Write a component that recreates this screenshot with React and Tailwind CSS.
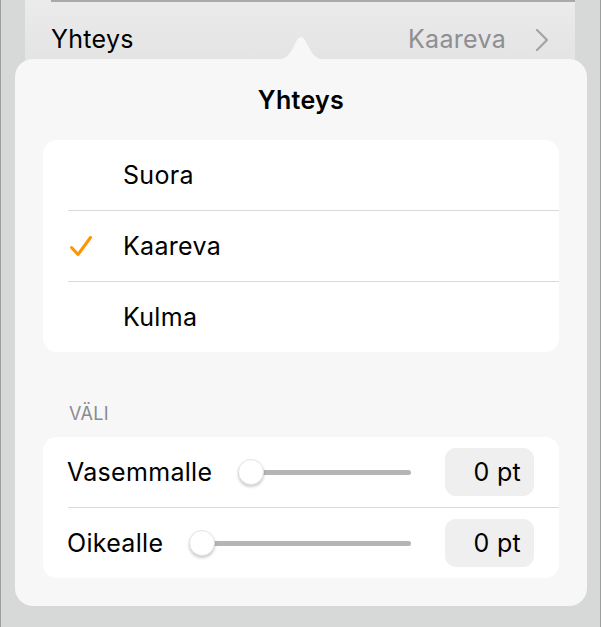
import React from "react";

const font = { fontFamily: "Inter, 'Noto Sans', sans-serif" };

function Check() {
  return (
    <svg width="24" height="22" viewBox="0 0 24 22" fill="none">
      <path d="M2.5 12.5 L9 19.5 L21.5 2.5" stroke="#ff9500" strokeWidth="3" strokeLinecap="round" strokeLinejoin="round" />
    </svg>
  );
}

function Chevron() {
  return (
    <svg width="16" height="24" viewBox="0 0 16 24" fill="none">
      <path d="M3 2 L13 12 L3 22" stroke="#a3a3a6" strokeWidth="2.2" strokeLinecap="round" strokeLinejoin="round" />
    </svg>
  );
}

function Option({ label, checked }) {
  return (
    <div className="flex h-[70px] items-center">
      <div className="flex w-[80px] pl-[26px]">{checked ? <Check /> : null}</div>
      <span className="text-[25px] leading-none tracking-[0.3px] text-black">{label}</span>
    </div>
  );
}

function SliderRow({ label }) {
  return (
    <div className="flex h-[70px] items-center pl-[24px] pr-[25px]">
      <span className="text-[25px] leading-none tracking-[0.3px] text-black">{label}</span>
      <div className="relative ml-[26px] mr-[34px] flex h-[28px] flex-1 items-center">
        <div className="h-[5px] w-full rounded-full bg-[#b5b5b5]" />
        <div className="absolute left-0 top-[1px] h-[26px] w-[26px] rounded-full border border-[#e4e4e4] bg-white shadow-[0_2px_3px_rgba(0,0,0,0.2)]" />
      </div>
      <div className="flex h-[48px] w-[89px] items-center justify-end rounded-[11px] bg-[#efeff0] pr-[13px] text-[25px] leading-none tracking-[0.3px] text-black">
        0 pt
      </div>
    </div>
  );
}

export default function App() {
  return (
    <div style={font} className="relative h-[627px] w-[601px] overflow-hidden border-x border-[#9d9d9d] bg-[#d7d9d8]">
      <div className="ml-[24px] h-[90px] w-[550px] bg-gradient-to-b from-[#ebebeb] to-[#e0e0e0]">
        <div className="ml-[26px] h-[2px] bg-[#a9a9a9]" />
        <div className="flex h-[74px] items-center pl-[26px] pr-[25px]">
          <span className="text-[25px] leading-none tracking-[0.3px] text-black">Yhteys</span>
          <span className="ml-auto text-[25px] leading-none tracking-[0.3px] text-[#8e8e93]">Kaareva</span>
          <span className="ml-[28px] mt-[1px]"><Chevron /></span>
        </div>
      </div>

      <svg className="absolute left-[250px] top-[36px]" width="100" height="24" viewBox="0 0 100 24">
        <path d="M22 24 C34 24 38 20 43 10 C46 3 48 1 50 1 C52 1 54 3 57 10 C62 20 66 24 78 24 Z" fill="#f7f7f7" />
      </svg>

      <div className="absolute left-[14px] top-[59px] h-[547px] w-[572px] rounded-[18px] bg-[#f7f7f7] pl-[28px] pt-[81px]">
        <div className="absolute left-0 right-0 top-[27px] text-center text-[25px] font-semibold leading-[28px] tracking-[0.3px] text-black">
          Yhteys
        </div>
        <div className="w-[516px] rounded-[14px] bg-white">
          <Option label="Suora" />
          <div className="ml-[25px] h-px bg-[#d9d9d9]" />
          <Option label="Kaareva" checked />
          <div className="ml-[25px] h-px bg-[#d9d9d9]" />
          <Option label="Kulma" />
        </div>
        <div className="pl-[26px] pt-[53px] pb-[14px] text-[18px] leading-[18px] tracking-[0.3px] text-[#8a8a8e]">VÄLI</div>
        <div className="w-[516px] rounded-[14px] bg-white">
          <SliderRow label="Vasemmalle" />
          <div className="ml-[25px] h-px bg-[#d9d9d9]" />
          <SliderRow label="Oikealle" />
        </div>
      </div>
    </div>
  );
}
